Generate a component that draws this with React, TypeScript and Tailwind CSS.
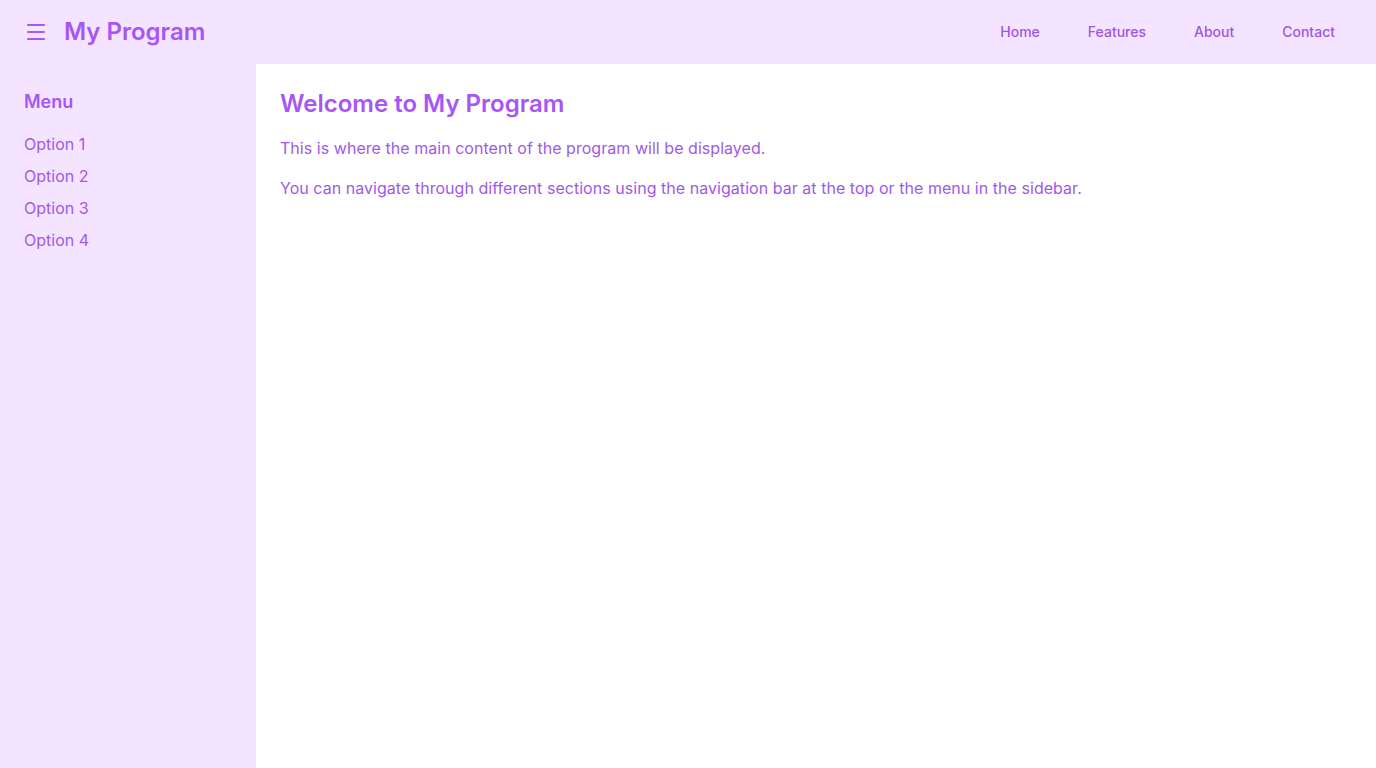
import React from 'react';
import { Menu } from 'lucide-react';

const navLinks = ['Home', 'Features', 'About', 'Contact'];
const options = ['Option 1', 'Option 2', 'Option 3', 'Option 4'];

export default function App() {
  return (
    <div className="flex h-screen flex-col bg-white font-['Inter',sans-serif]">
      {/* Top bar */}
      <header className="flex h-16 shrink-0 items-center justify-between bg-[#f5e4ff] px-4">
        <div className="flex items-center gap-2">
          <button className="p-2 text-[#a855f7]">
            <Menu className="h-6 w-6" strokeWidth={2} />
          </button>
          <span className="text-2xl font-semibold text-[#a855f7]">My Program</span>
        </div>
        <nav className="flex items-center pr-px">
          {navLinks.map((link) => (
            <a key={link} className="px-6 text-sm font-medium text-[#9f55e6]">
              {link}
            </a>
          ))}
        </nav>
      </header>

      <div className="flex flex-1">
        {/* Sidebar */}
        <aside className="w-64 shrink-0 bg-[#f5e4ff] p-6">
          <h2 className="mb-4 text-lg font-semibold text-[#a855f7]">Menu</h2>
          <ul className="space-y-2">
            {options.map((opt) => (
              <li key={opt} className="text-base text-[#a05ae6]">
                {opt}
              </li>
            ))}
          </ul>
        </aside>

        {/* Main content */}
        <main className="flex-1 p-6">
          <h1 className="mb-4 text-2xl font-semibold text-[#a855f7]">Welcome to My Program</h1>
          <p className="mb-4 text-base tracking-[0.0025em] text-[#a05ae6]">
            This is where the main content of the program will be displayed.
          </p>
          <p className="text-base tracking-[0.0025em] text-[#a05ae6]">
            You can navigate through different sections using the navigation bar at the top or the menu in the sidebar.
          </p>
        </main>
      </div>
    </div>
  );
}
